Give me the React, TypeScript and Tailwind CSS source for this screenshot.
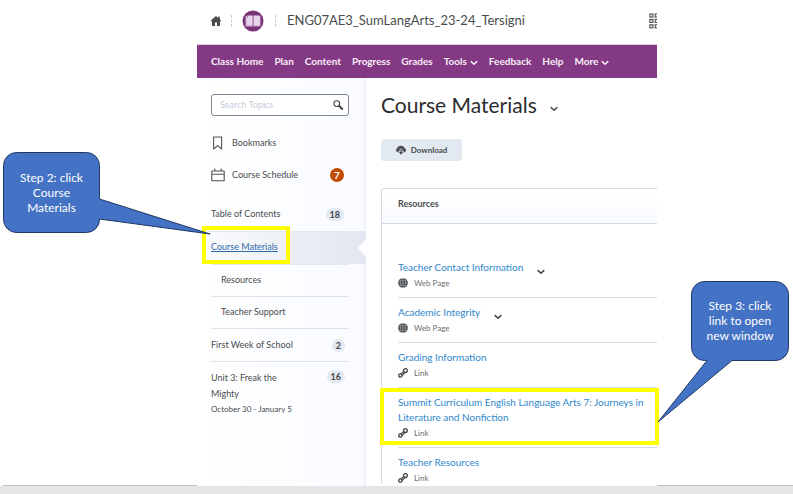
import type { ReactNode } from "react";

function Chevron({ className = "" }: { className?: string }) {
  return (
    <svg viewBox="0 0 8 6" className={`h-[6px] w-[8px] shrink-0 ${className}`} fill="none" stroke="currentColor" strokeWidth="1.5" strokeLinecap="round" strokeLinejoin="round" aria-hidden="true">
      <path d="M1.2 1.6 4 4.2 6.800 1.600" />
    </svg>
  );
}

function HomeIcon() {
  return (
    <svg viewBox="0 0 12 12" className="h-3 w-3" fill="#4a4c50" aria-hidden="true">
      <path d="M6 1 0.8 5.6 1.8 6.7 2 6.5V11h3V7.5h2V11h3V6.5l.2.2 1-1.1L9.8 4.3V1.5H8.2v1.4z" />
    </svg>
  );
}

function BookLogo() {
  return (
    <svg viewBox="0 0 22 22" className="h-[22px] w-[22px]" aria-hidden="true">
      <circle cx="11" cy="11" r="10.5" fill="#7b3378" />
      <path d="M3.5 6h15v10.500h-15z" fill="#c9a3cb" />
      <path d="M4.500 5.500h6.200v10H4.500zM11.500 5.500h6.200v10h-6.200z" fill="#e9d5ea" />
      <path d="M5.400 5v2.500M11.100 5.500v11" stroke="#8e4f8e" strokeWidth="0.8" />
    </svg>
  );
}

function GridIcon() {
  return (
    <svg viewBox="0 0 8 16" className="h-4 w-2" fill="none" stroke="#55585c" strokeWidth="1.2" aria-hidden="true">
      {[1, 6.4, 11.8].map((y) => (
        <g key={y}>
          <rect x="0.9" y={y} width="3" height="3" />
          <rect x="6.2" y={y} width="3" height="3" />
        </g>
      ))}
    </svg>
  );
}

function GlobeIcon() {
  return (
    <svg viewBox="0 0 10 10" className="h-[10px] w-[10px]" aria-hidden="true">
      <circle cx="5" cy="5" r="4.8" fill="#3f4246" />
      <g fill="none" stroke="#d4d6d9" strokeWidth="0.4">
        <path d="M5 .3v9.4M.4 5h9.2M1.2 2.7h7.6M1.2 7.3h7.6" />
        <ellipse cx="5" cy="5" rx="2.5" ry="4.6" />
      </g>
    </svg>
  );
}

function LinkIcon() {
  return (
    <svg viewBox="0 0 10 10" className="h-[10px] w-[10px]" fill="none" stroke="#3f4246" strokeWidth="1.3" aria-hidden="true">
      <circle cx="2.4" cy="7.500" r="1.700" />
      <circle cx="7.400" cy="2.600" r="1.900" />
      <path d="M2.800 5.900 5.900 3.600M4.100 7.600 6.900 4.700" strokeWidth="1.200" />
    </svg>
  );
}

function CloudIcon() {
  return (
    <svg viewBox="0 0 10 10" className="h-[10px] w-[10px]" fill="#4a4c50" aria-hidden="true">
      <path d="M2.3 7.5A2.2 2.2 0 0 1 .9 3.600 4 3.600 0 0 1 8.600 3.100 2.300 2.300 0 0 1 8 7.500H7.600V6H6.300V3.700H3.700V6H2.400z" />
      <path d="M4.400 4.200h1.200v2.600H7.300L5 9.700 2.700 6.800h1.700z" />
    </svg>
  );
}

function BookmarkIcon() {
  return (
    <svg viewBox="0 0 14 14" className="h-[14px] w-[14px]" fill="none" stroke="#4f5256" strokeWidth="1.1" strokeLinejoin="round" aria-hidden="true">
      <path d="M2.600 1h8v12L6.600 9.600l-4 3.400z" />
    </svg>
  );
}

function CalendarIcon() {
  return (
    <svg viewBox="0 0 14 14" className="h-[14px] w-[14px]" fill="none" stroke="#4f5256" strokeWidth="1.1" strokeLinejoin="round" aria-hidden="true">
      <path d="M.8 3h12.4v9.8H.8zM.8 6.2h12.4M3.8.6v3M10.2.6v3" />
    </svg>
  );
}

const navItems = [
  { label: "Class Home" },
  { label: "Plan" },
  { label: "Content" },
  { label: "Progress" },
  { label: "Grades" },
  { label: "Tools", menu: true },
  { label: "Feedback" },
  { label: "Help" },
  { label: "More", menu: true },
];

type Topic = { title: string; kind: "Web Page" | "Link"; menu?: boolean; marked?: boolean };

const topics: Topic[] = [
  { title: "Teacher Contact Information", kind: "Web Page", menu: true },
  { title: "Academic Integrity", kind: "Web Page", menu: true },
  { title: "Grading Information", kind: "Link" },
  { title: "Summit Curriculum English Language Arts 7: Journeys in Literature and Nonfiction", kind: "Link", marked: true },
  { title: "Teacher Resources", kind: "Link" },
];

function Count({ children }: { children: ReactNode }) {
  return (
    <span className="flex h-[13px] min-w-[13px] items-center justify-center rounded-full bg-[#e3e9f1] px-1 text-[9px] leading-none font-bold text-[#45484d]">
      {children}
    </span>
  );
}

function Sidebar() {
  return (
    <aside className="w-[169px] shrink-0 border-r-2 border-[#eef1f6] bg-gradient-to-r from-white to-[#f9fbff] pl-[14px] text-[9px] leading-4 text-[#494c4e]">
      <form className="mt-4 mr-[15px] flex h-[22px] items-center rounded-[3px] border border-[#7c8695] bg-white pr-1">
        <input type="search" aria-label="Search Topics" placeholder="Search Topics" className="min-w-0 flex-1 bg-transparent pl-2 text-[9px] outline-none placeholder:text-[#c3ccd8]" />
        <button type="button" aria-label="Search">
          <svg viewBox="0 0 12 12" className="h-3 w-3" fill="none" stroke="#3f4246" aria-hidden="true">
            <circle cx="4.8" cy="4.6" r="2.9" strokeWidth="1.1" />
            <path d="m7.200 7 3 3" strokeWidth="2" strokeLinecap="round" />
          </svg>
        </button>
      </form>
      <ul className="mt-[11px] mr-5">
        <li className="flex h-8 items-center">
          <a href="#bookmarks" className="flex items-center gap-[7px]"><BookmarkIcon />Bookmarks</a>
        </li>
        <li className="flex h-8 items-center justify-between">
          <a href="#schedule" className="flex items-center gap-[7px]"><CalendarIcon />Course Schedule</a>
          <span className="flex h-[14px] w-[14px] items-center justify-center rounded-full bg-[#c24a00] text-[10px] leading-none font-bold text-white">7</span>
        </li>
      </ul>
      <nav aria-label="Units" className="mt-[7px]">
        <div className="mr-5 flex h-[33px] items-center justify-between pb-px">
          <a href="#toc">Table of Contents</a>
          <Count>18</Count>
        </div>
        <div className="relative -ml-1 -mr-[2px] flex h-[33px] items-center border-t border-[#e3e9f1] bg-gradient-to-r from-[#f9fafc] to-[#e1e7f0] pb-[2px] pl-1">
          <a href="#materials" className="text-[#2f6aa8] underline">Course Materials</a>
          <span className="absolute -top-[6px] -left-[5px] h-[38px] w-[88px] border-4 border-[#ffff00]" />
          <svg viewBox="0 0 8 18" className="absolute top-[7px] right-0 h-[18px] w-2" fill="#fff" aria-hidden="true"><path d="M8 0v18L0 9z" /></svg>
        </div>
        <div className="mr-[15px] flex h-8 items-center border-t border-[#e3e9f1] pb-[2px] pl-[10px]"><a href="#resources">Resources</a></div>
        <div className="mr-[15px] flex h-8 items-center border-t border-[#dce3ed] pb-[2px] pl-[10px]"><a href="#support">Teacher Support</a></div>
        <div className="mr-[15px] flex h-[33px] items-center justify-between border-t border-[#dce3ed] pr-1">
          <a href="#first-week">First Week of School</a>
          <Count>2</Count>
        </div>
        <div className="mr-[15px] flex items-start justify-between border-t border-[#dce3ed] pt-2 pr-1">
          <a href="#unit-3" className="w-[70px]">Unit 3: Freak the Mighty</a>
          <Count>16</Count>
        </div>
        <p className="text-[8px] leading-[14px]">October 30 - January 5</p>
      </nav>
    </aside>
  );
}

function TopicRow({ topic, first }: { topic: Topic; first: boolean }) {
  return (
    <li className={`relative border-t pt-[7px] pb-2 last:pb-0 ${first ? "border-transparent" : "border-[#d3dbe4]"}`}>
      <div className="flex items-start gap-[14px]">
        <a href="#topic" className="text-[10px] leading-[15px] text-[#2f87cc]">{topic.title}</a>
        {topic.menu && (
          <button type="button" aria-label={`Actions for ${topic.title}`} className="mt-[9px] text-[#3f4246]"><Chevron /></button>
        )}
      </div>
      <div className="mt-[2px] flex h-3 items-center gap-[6px] text-[8px] leading-3 text-[#6b6e72]">
        {topic.kind === "Link" ? <LinkIcon /> : <GlobeIcon />}
        {topic.kind}
      </div>
      {topic.marked && <span className="absolute top-0 -right-[2px] bottom-[2px] -left-[18px] border-4 border-[#ffff00]" />}
    </li>
  );
}

function Content() {
  return (
    <main className="min-w-0 flex-1 bg-white pl-[15px]">
      <div className="mt-[13px] flex items-center gap-[13px]">
        <h1 className="text-[21px] leading-7 text-[#2b2d30]">Course Materials</h1>
        <button type="button" aria-label="Course Materials actions" className="mt-2 text-[#494c4e]"><Chevron /></button>
      </div>
      <button type="button" className="mt-5 flex h-[22px] w-[81px] items-center justify-center gap-[5px] rounded-[3px] bg-[#e3e9f1] text-[8px] font-bold text-[#494c4e]">
        <CloudIcon />
        Download
      </button>
      <section className="mt-[27px] rounded-tl-[4px] border-t border-l border-[#d3dbe4]">
        <h2 className="flex h-[35px] items-center rounded-tl-[4px] border-b border-[#d3dbe4] bg-gradient-to-b from-white to-[#f9fbff] pb-1 pl-4 text-[9px] font-bold text-[#494c4e]">Resources</h2>
        <ul className="pt-7 pl-4">
          {topics.map((topic, i) => <TopicRow key={topic.title} topic={topic} first={i === 0} />)}
        </ul>
      </section>
    </main>
  );
}

export default function App() {
  return (
    <div className="relative flex min-h-screen flex-col bg-white font-['Lato',sans-serif]">
      <div className="flex flex-1">
        <div className="w-[197px] shrink-0 pl-[3px]"><div className="h-full border-b border-[#c0c0c0]" /></div>
        <div className="flex min-w-0 flex-1 flex-col">
          <header className="flex h-[45px] items-center border-b border-[#dcd3de] pb-[3px] pl-[13px]">
            <a href="#home" aria-label="Home"><HomeIcon /></a>
            <span className="ml-[9px] h-3 border-l border-dashed border-[#c3ccd8]" />
            <span className="ml-[10px]"><BookLogo /></span>
            <span className="ml-[11px] h-3 border-l border-dashed border-[#c3ccd8]" />
            <span className="ml-[11px] pb-[2px] text-[13px] leading-5 text-[#494c4e]">ENG07AE3_SumLangArts_23-24_Tersigni</span>
            <button type="button" aria-label="Course selector" className="ml-auto"><GridIcon /></button>
          </header>
          <nav aria-label="Course" className="flex h-[33px] items-center gap-[11px] bg-[#843984] pb-px pl-[14px] text-[10px] leading-4 font-bold text-[#f7eef7]">
            {navItems.map((item) => (
              <a key={item.label} href="#nav" className="flex items-center gap-[3px] whitespace-nowrap">
                {item.label}
                {item.menu && <Chevron className="mt-[3px]" />}
              </a>
            ))}
          </nav>
          <div className="flex flex-1">
            <Sidebar />
            <Content />
          </div>
        </div>
        <div className="w-[136px] shrink-0 border-b border-[#c0c0c0]" />
      </div>
      <footer className="h-2 bg-[#e5e5e5]" />

      <div className="absolute top-[152px] left-[3px] flex h-[81px] w-[97px] items-center justify-center pb-px">
        <svg viewBox="0 0 208 83" className="absolute top-0 left-0 h-[83px] w-[208px]" fill="#4472c4" stroke="#203864" strokeWidth="1" strokeLinejoin="round" aria-hidden="true">
          <path d="M13.5.5h70a13 13 0 0 1 13 13v33.500L207 82 96.500 67a13 13 0 0 1-13 13.500h-70a13 13 0 0 1-13-13v-54a13 13 0 0 1 13-13z" />
        </svg>
        <p className="relative text-center text-[12px] leading-[15px] text-white">Step 2: click<br />Course<br />Materials</p>
      </div>
      <div className="absolute top-[281px] right-[4px] flex h-[80px] w-[98px] items-center justify-center pb-px">
        <svg viewBox="0 0 132 142" className="absolute top-0 right-0 h-[142px] w-[132px]" fill="#4472c4" stroke="#203864" strokeWidth="1" strokeLinejoin="round" aria-hidden="true">
          <path d="M47.500.5h71a13 13 0 0 1 13 13v53a13 13 0 0 1-13 13H75L1 141l49-61.500h-2.500a13 13 0 0 1-13-13v-53a13 13 0 0 1 13-13z" />
        </svg>
        <p className="relative text-center text-[12px] leading-[15px] text-white">Step 3: click<br />link to open<br />new window</p>
      </div>
    </div>
  );
}
